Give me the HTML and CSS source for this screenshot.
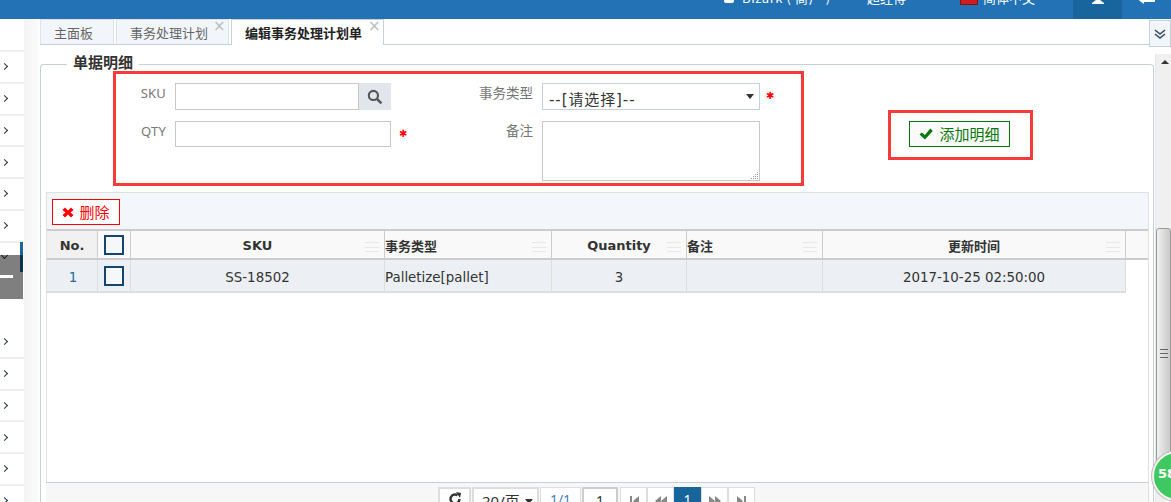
FILE: index.html
```html
<!DOCTYPE html>
<html lang="zh">
<head>
<meta charset="utf-8">
<title>编辑事务处理计划单</title>
<link rel="stylesheet" href="styles.css">
</head>
<body>
<header class="topbar">
  <div class="user"><span class="user-ico"></span><span>Bizark ( 商户 )</span></div>
  <div class="top-item">超经得</div>
  <div class="top-item lang"><span class="flag"></span><span>简体中文</span></div>
  <div class="top-btn active"><svg width="12" height="8" viewBox="0 0 12 8"><path d="M4 0h4v4l4 3v1H0V7l4-3z" fill="#fff"/></svg></div>
  <div class="top-btn back"><svg width="16" height="6" viewBox="0 0 16 6"><path d="M5 0v1.500h11V4H5v2L0 2.500z" fill="#fff"/></svg></div>
</header>
<div class="body">
  <nav class="side">
    <div class="nav-item first"></div>
    <div class="nav-item"><i class="chev"></i></div>
    <div class="nav-item"><i class="chev"></i></div>
    <div class="nav-item"><i class="chev"></i></div>
    <div class="nav-item"><i class="chev"></i></div>
    <div class="nav-item"><i class="chev"></i></div>
    <div class="nav-item"><i class="chev"></i></div>
    <div class="nav-open"><i class="chev down"></i><span class="bar"></span><div class="nav-sub"><span class="dash"></span></div></div>
    <div class="nav-item"><i class="chev"></i></div>
    <div class="nav-item"><i class="chev"></i></div>
    <div class="nav-item"><i class="chev"></i></div>
    <div class="nav-item"><i class="chev"></i></div>
    <div class="nav-item"><i class="chev"></i></div>
    <div class="nav-item"><i class="chev"></i></div>
  </nav>
  <main class="main">
    <div class="tabs">
      <div class="tab">主面板</div>
      <div class="tab closable">事务处理计划<span class="x">×</span></div>
      <div class="tab closable current">编辑事务处理计划单<span class="x">×</span></div>
      <div class="tab-more"><svg width="12" height="10" viewBox="0 0 12 10"><path d="M1 1l5 4 5-4M1 5l5 4 5-4" fill="none" stroke="#34495e" stroke-width="1.600"/></svg></div>
    </div>
    <div class="work">
      <section class="detail">
        <h2 class="legend">单据明细</h2>
        <form class="form">
          <div class="fields">
            <label class="lab l-sku">SKU</label>
            <div class="sku"><input class="inp" type="text"><span class="search"><svg width="16" height="16" viewBox="0 0 15 15"><circle cx="6" cy="6" r="4.300" fill="none" stroke="#555" stroke-width="2"/><path d="M9.500 9.500l4 4" stroke="#555" stroke-width="2.400"/></svg></span></div>
            <label class="lab cn">事务类型</label>
            <div class="sel-wrap"><div class="sel">--[请选择]--<i class="caret"></i></div><b class="req">✱</b></div>
            <label class="lab l-qty">QTY</label>
            <div class="qty-wrap"><input class="inp qty" type="text"><b class="req">✱</b></div>
            <label class="lab cn">备注</label>
            <div class="ta"><svg class="grip" width="9" height="9" viewBox="0 0 9 9"><path d="M7 1h1v1H7zM5 3h1v1H5zM7 3h1v1H7zM3 5h1v1H3zM5 5h1v1H5zM7 5h1v1H7zM1 7h1v1H1zM3 7h1v1H3zM5 7h1v1H5zM7 7h1v1H7z" fill="#999"/></svg></div>
          </div>
          <div class="add-wrap"><button class="add" type="button"><svg width="14" height="12" viewBox="0 0 13 11"><path d="M.5 6l2-2 3 2.500L10.500.5l2.300 2.200-7.300 7.800z" fill="#087708"/></svg>添加明细</button></div>
        </form>
        <div class="panel">
          <div class="toolbar"><button class="del" type="button"><svg width="12" height="11" viewBox="0 0 12 11"><path d="M3 .5L6 3.500 9 .5l2.500 2.500-3 2.500 3 2.500L9 10.500l-3-3-3 3L.5 8l3-2.500-3-2.500z" fill="#f00"/></svg>删除</button></div>
          <div class="grid head">
            <div class="c no">No.</div>
            <div class="c chk"><span class="box"></span></div>
            <div class="c ctr">SKU<span class="menu"></span></div>
            <div class="c left">事务类型<span class="menu"></span></div>
            <div class="c ctr">Quantity<span class="menu"></span></div>
            <div class="c left">备注<span class="menu"></span></div>
            <div class="c ctr">更新时间<span class="menu"></span></div>
            <div class="c end"></div>
          </div>
          <div class="grid row">
            <div class="c num">1</div>
            <div class="c chk"><span class="box"></span></div>
            <div class="c ctr">SS-18502</div>
            <div class="c left">Palletize[pallet]</div>
            <div class="c ctr">3</div>
            <div class="c left"></div>
            <div class="c ctr">2017-10-25 02:50:00</div>
          </div>
          <div class="spacer"></div>
          <div class="pager">
            <span class="pg refresh"><svg width="14" height="14" viewBox="0 0 14 14"><path d="M11.500 7A4.500 4.500 0 1 1 9.500 3.200" fill="none" stroke="#333" stroke-width="2.400"/><path d="M8 0l5 1-1 5z" fill="#333"/></svg></span>
            <span class="pg size">20/页<i class="caret"></i></span>
            <span class="pg total">1/1</span>
            <span class="pg goto"><span class="goin">1</span></span>
            <span class="pg nav"><svg width="12" height="10" viewBox="0 0 12 10"><path d="M2 0h2v10H2zM11 0v10L5 5z" fill="#888"/></svg></span>
            <span class="pg nav"><svg width="14" height="10" viewBox="0 0 14 10"><path d="M7 0v10L1 5zM13 0v10L7 5z" fill="#888"/></svg></span>
            <span class="pg nav on">1</span>
            <span class="pg nav"><svg width="14" height="10" viewBox="0 0 14 10"><path d="M1 0v10l6-5zM7 0v10l6-5z" fill="#888"/></svg></span>
            <span class="pg nav"><svg width="12" height="10" viewBox="0 0 12 10"><path d="M1 0v10l6-5zM8 0h2v10H8z" fill="#888"/></svg></span>
          </div>
        </div>
      </section>
      <div class="scroll">
        <div class="arrow"></div>
        <div class="thumb"><span class="lines"></span></div>
      </div>
    </div>
    <div class="note n-form"></div>
    <div class="note n-add"></div>
    <div class="bubble"><span>58</span></div>
  </main>
</div>
</body>
</html>
```
FILE: styles.css
```css
* { box-sizing: border-box; }
html, body { margin: 0; height: 100%; }
body {
  width: 1171px; height: 502px; overflow: hidden; background: #fff;
  font: 12px "DejaVu Sans", "Noto Sans CJK SC", sans-serif; color: #333;
  display: flex; flex-direction: column;
}
.topbar {
  height: 19px; flex: none; background: #2272b5; color: #fff; display: flex; justify-content: flex-end;
  font: 13px/10px "Noto Sans CJK SC", sans-serif; overflow: hidden;
}
.user { width: 143px; display: flex; gap: 8px; height: 10px; margin-top: -7px; white-space: pre; letter-spacing: .6px; }
.user-ico { width: 10px; height: 9px; background: #fff; border-radius: 2px; margin-top: 1px; }
.top-item { height: 19px; margin-top: -7px; width: 93px; white-space: nowrap; }
.lang { display: flex; gap: 5px; width: 113px; }
.flag { width: 18px; height: 12px; margin-top: 0; background: #d01c1c; border: 1px solid #7a1515; }
.top-btn { width: 49px; height: 19px; display: flex; justify-content: center; align-items: flex-start; overflow: hidden; }
.top-btn.active { background: #17659c; }
.top-btn svg { margin-top: -4px; }
.top-btn.back svg { margin-top: -2px; }

.body { flex: 1; display: flex; min-height: 0; }
.side {
  width: 40px; flex: none; background: linear-gradient(90deg, #fff 0, #fff 24px, #f4f4f4 24px, #fafafa 36px, #fff 40px);
  overflow: hidden;
}
.nav-item { width: 24px; height: 31.750px; border-bottom: 2px solid #eee; display: flex; align-items: center; background: #fff; }
.nav-item.first { height: 33px; }
.chev { width: 5px; height: 5px; border-top: 1.500px solid #234; border-right: 1.500px solid #234; transform: rotate(45deg); margin-left: 2px; display: block; }
.chev.down { transform: rotate(135deg); margin-left: 2px; }
.nav-open { width: 24px; height: 84.500px; position: relative; background: #fff; padding-top: 10px; }
.bar { position: absolute; right: 1px; top: -1px; width: 3px; height: 30px; background: #17659c; }
.nav-sub { position: absolute; left: 0; top: 12px; width: 23px; height: 44px; background: rgba(0, 0, 0, .5); display: flex; align-items: center; }
.dash { width: 13px; height: 3px; background: #fff; }

.main { flex: 1; min-width: 0; display: flex; flex-direction: column; position: relative; }
.tabs { height: 26px; flex: none; display: flex; align-items: flex-end; border-bottom: 1px solid #c5d0d8; position: relative; }
.tab {
  height: 25px; width: 74px; margin-right: 2px; padding-left: 13px; background: #f2f6fb; border: 1px solid #dbe4ec; border-bottom: none;
  font: 13px/25px "Noto Sans CJK SC", sans-serif; color: #666; position: relative;
}
.tab.closable { width: 113px; }
.tab.current {
  width: 153px; height: 26px; background: #fff; color: #222; font-weight: 700; border-color: #c5d0d8; margin-bottom: -1px; line-height: 26px;
}
.x { position: absolute; right: 1px; top: -1px; font: 15px/15px "DejaVu Sans", sans-serif; color: #bbb; font-weight: 400; width: 14px; }
.tab-more {
  position: absolute; right: 0; top: 1px; width: 22px; height: 27px; background: #f2f6fb; border: 1px solid #c5d0d8;
  display: flex; align-items: center; justify-content: center;
}
.work { flex: 1; display: flex; min-height: 0; }
.detail { width: 1114px; flex: none; margin-top: 19px; border: 1px solid #c5d0d8; border-bottom: none; border-radius: 4px 4px 0 0; padding: 0 5px; position: relative; display: flex; flex-direction: column; min-height: 0; }
.legend {
  position: absolute; left: 26px; top: -13px; margin: 0; padding: 0 6px; background: #fff;
  font: 700 15px/20px "Noto Sans CJK SC", sans-serif; color: #333;
}
.form { height: 127px; flex: none; display: flex; }
.fields {
  margin: 18px 0 0 84px; width: 626px; display: grid;
  grid-template-columns: 36px 245px 131px 1fr; grid-template-rows: 27px 60px; row-gap: 11px; align-content: start;
}
.lab { font: 13px/20px "Noto Sans", "Noto Sans CJK SC", sans-serif; color: #777; text-align: right; letter-spacing: .2px; }
.cn { font-size: 13.500px; padding-right: 9px; letter-spacing: 0; }
.sku { display: flex; margin-left: 9px; width: 216px; height: 27px; }
.inp { border: 1px solid #c8c8c8; height: 27px; width: 184px; margin: 0; padding: 0; background: #fff; display: block; }
.search { width: 32px; height: 27px; background: #e1e5ec; display: flex; align-items: center; justify-content: center; }
.qty-wrap { display: flex; margin-left: 9px; height: 26px; gap: 8px; }
.qty { width: 216px; height: 26px; }
.req { color: #f00; font: 400 10px/26px "DejaVu Sans", sans-serif; }
.sel-wrap { display: flex; gap: 6px; }
.sel {
  width: 218px; height: 27px; border: 1px solid #c5d0d8; font: 15px/32px "DejaVu Sans", "Noto Sans CJK SC", sans-serif; letter-spacing: .9px; color: #333; padding-left: 6px; position: relative;
}
.caret { position: absolute; right: 5px; top: 10px; width: 0; height: 0; border: 4px solid transparent; border-top: 5px solid #333; border-bottom: 0; }
.ta { width: 218px; height: 60px; border: 1px solid #c8c8c8; position: relative; }
.grip { position: absolute; right: 0; bottom: 0; }
.add-wrap { margin: 56px 0 0 153px; }
.add {
  width: 101px; height: 26px; padding: 0; border: 1px solid #087708; background: #fafafa; color: #087708;
  font: 15px/24px "Noto Sans CJK SC", sans-serif; display: flex; align-items: center; justify-content: center; gap: 6px;
}
.panel { flex: 1; display: flex; flex-direction: column; border-left: 1px solid #e0e0e0; border-right: 1px solid #e0e0e0; min-height: 0; width: 1103px; }
.toolbar { height: 39px; flex: none; background: #f3f7fb; border-top: 1px solid #e0e0e0; border-bottom: 2px solid #ccc; padding: 6px 5px; }
.del {
  width: 68px; height: 26px; padding: 0; border: 1px solid #f00; background: #fff; color: #f00;
  font: 15px/24px "Noto Sans CJK SC", sans-serif; display: flex; align-items: center; justify-content: center; gap: 5px;
}
.grid { display: grid; grid-template-columns: 51px 33px 254px 167px 135px 136px 303px 1fr; flex: none; }
.head { height: 29px; background: #f9f9f9; border-bottom: 2px solid #ccc; font-weight: 700; font-size: 13px; }
.row { height: 33px; width: 1079px; background: #ecf0f4; border-bottom: 2px solid #ddd; grid-template-columns: 51px 33px 254px 167px 135px 136px 303px; font-size: 13.400px; }
.c { border-right: 2px solid #e4e4e4; display: flex; align-items: center; position: relative; padding: 1px 0 0; min-width: 0; white-space: nowrap; }
.row .c { border-right-width: 1px; border-color: #ddd; padding-top: 3px; }
.head .c { border-right-width: 1px; border-color: #ccc; }
.ctr { justify-content: center; }
.no { background: #f1f1f1; justify-content: center; }
.num { justify-content: center; color: #2a6a9e; padding-left: 2px; }
.row .c.chk, .head .c.chk { justify-content: center; padding-top: 0; }
.end { border-right: none; }
.box { width: 20px; height: 20px; border: 2px solid #14456e; display: block; background: #f5f7f9; }
.menu { position: absolute; right: 5px; top: 11px; width: 14px; height: 10px; border-top: 1px solid #e8e8e8; border-bottom: 1px solid #e8e8e8; }
.menu::before { content: ""; display: block; margin-top: 4px; height: 1px; background: #e8e8e8; }
.spacer { height: 189px; flex: none; }
.pager {
  flex: 1; min-height: 0; background: #f7f7f7; border-top: 1px solid #c5d0d8; display: flex; justify-content: flex-start; gap: 1px;
  padding: 4px 0 0 392px; margin-left: -1px; overflow: hidden;
}
.pg { height: 26px; border: 1px solid #ddd; background: #fff; display: flex; align-items: flex-start; justify-content: center; font: 14px/26px "Noto Sans", "Noto Sans CJK SC", sans-serif; padding-top: 3px; position: relative; flex: none; }
.refresh { width: 33px; border-width: 2px 2px 0 2px; }
.size { width: 67px; justify-content: flex-start; padding-left: 8px; padding-top: 0; font-size: 15px; line-height: 24px; border-width: 2px; }
.size .caret { right: 4px; top: 10px; }
.total { width: 41px; color: #4a7fc0; padding-top: 0; line-height: 24px; }
.goto { width: 36px; border: none; background: none; padding: 0; }
.goin { width: 36px; height: 26px; border: 2px solid #ccc; background: #fff; text-align: center; line-height: 24px; }
.nav { width: 27px; margin-left: -1px; padding-top: 8px; }
.nav:nth-child(5) { margin-left: 1px; }
.nav.on { background: #17659c; color: #fff; border-color: #17659c; padding-top: 0; line-height: 24px; }
.scroll { flex: 1; margin: 9px 0 0 1px; background: #f0f0f0; position: relative; border-left: 1px solid #e8e8e8; }
.arrow { position: absolute; left: 5px; top: 6px; width: 0; height: 0; border: 4px solid transparent; border-bottom: 4px solid #333; border-top: 0; }
.thumb { position: absolute; left: 0; top: 174px; right: 0; height: 260px; background: linear-gradient(90deg, #f0f0f0, #c9c9cb); border: 1px solid #9a9a9a; border-radius: 3px 3px 0 0; }
.lines { position: absolute; left: 3px; top: 120px; width: 8px; height: 9px; border-top: 1px solid #666; border-bottom: 1px solid #666; }
.lines::before { content: ""; display: block; margin-top: 3px; height: 1px; background: #666; }

.note { position: absolute; border: 3px solid #f83a3a; pointer-events: none; }
.n-form { left: 73px; top: 52px; width: 691px; height: 115px; }
.n-add { left: 848px; top: 91px; width: 145px; height: 50px; }
.bubble {
  position: absolute; left: 1112px; top: 432px; width: 50px; height: 50px; border-radius: 50%;
  background: #3fc85f; border: 2px solid #f2f2f2; box-shadow: 0 0 0 1px #bbb; color: #fff; font: 700 13px/42px "DejaVu Sans", sans-serif; padding-left: 4px;
}
```
